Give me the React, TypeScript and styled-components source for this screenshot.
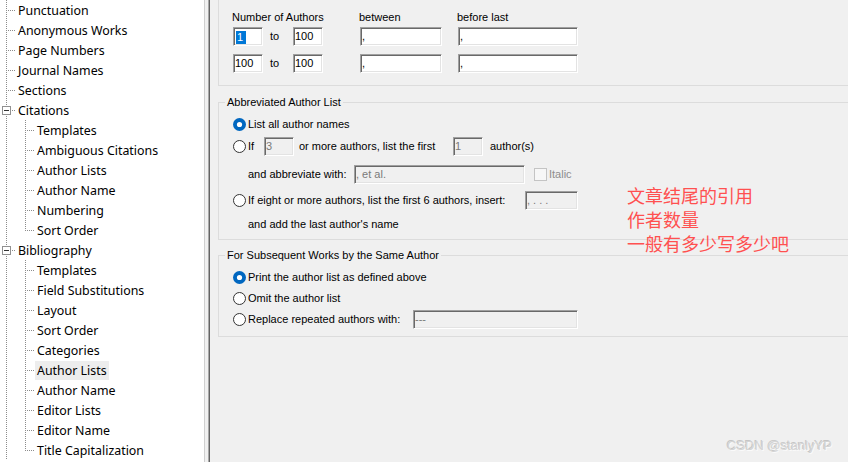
import styled, { createGlobalStyle } from "styled-components";

const GlobalStyle = createGlobalStyle`
  html, body {
    margin: 0;
    padding: 0;
  }
  body {
    width: 848px;
    height: 462px;
    overflow: hidden;
    background: #f0f0f0;
  }
`;

type TreeRow = {
  label: string;
  level: 1 | 2;
  last?: boolean;
  box?: boolean;
  selected?: boolean;
};

const treeRows: TreeRow[] = [
  { label: "Punctuation", level: 1 },
  { label: "Anonymous Works", level: 1 },
  { label: "Page Numbers", level: 1 },
  { label: "Journal Names", level: 1 },
  { label: "Sections", level: 1 },
  { label: "Citations", level: 1, box: true },
  { label: "Templates", level: 2 },
  { label: "Ambiguous Citations", level: 2 },
  { label: "Author Lists", level: 2 },
  { label: "Author Name", level: 2 },
  { label: "Numbering", level: 2 },
  { label: "Sort Order", level: 2, last: true },
  { label: "Bibliography", level: 1, box: true },
  { label: "Templates", level: 2 },
  { label: "Field Substitutions", level: 2 },
  { label: "Layout", level: 2 },
  { label: "Sort Order", level: 2 },
  { label: "Categories", level: 2 },
  { label: "Author Lists", level: 2, selected: true },
  { label: "Author Name", level: 2 },
  { label: "Editor Lists", level: 2 },
  { label: "Editor Name", level: 2 },
  { label: "Title Capitalization", level: 2, last: true },
];

const DOT = "#8c8c8c";

// dotted connector lines of the tree, drawn per row
const Connector = ({ row }: { row: TreeRow }) => {
  const w = row.level === 1 ? 16 : 35;
  return (
    <svg width={w} height={20} shapeRendering="crispEdges">
      <line x1={6.5} y1={0} x2={6.5} y2={20} stroke={DOT} strokeDasharray="1 1" />
      {row.level === 1 && !row.box && (
        <line x1={8} y1={10.5} x2={16} y2={10.5} stroke={DOT} strokeDasharray="1 1" />
      )}
      {row.box && (
        <>
          <line x1={12} y1={10.5} x2={16} y2={10.5} stroke={DOT} strokeDasharray="1 1" />
          <rect x={2.5} y={6.5} width={8} height={8} fill="#fff" stroke="#919191" />
          <line x1={4} y1={10.5} x2={9} y2={10.5} stroke="#333" />
        </>
      )}
      {row.level === 2 && (
        <>
          <line
            x1={25.5}
            y1={0}
            x2={25.5}
            y2={row.last ? 11 : 20}
            stroke={DOT}
            strokeDasharray="1 1"
          />
          <line x1={27} y1={10.5} x2={35} y2={10.5} stroke={DOT} strokeDasharray="1 1" />
        </>
      )}
    </svg>
  );
};

const RadioIcon = ({ checked }: { checked?: boolean }) => (
  <svg width={13} height={13} viewBox="0 0 13 13">
    {checked ? (
      <>
        <circle cx={6.5} cy={6.5} r={6.5} fill="#0067c0" />
        <circle cx={6.5} cy={6.5} r={2.6} fill="#fff" />
      </>
    ) : (
      <circle cx={6.5} cy={6.5} r={6} fill="#fff" stroke="#333" strokeWidth={1} />
    )}
  </svg>
);

export default function App() {
  return (
    <>
      <GlobalStyle />
      <Window>
        <TreePanel>
          {treeRows.map((row, i) => (
            <TreeItem key={i}>
              <Connector row={row} />
              <TreeLabel $selected={row.selected}>{row.label}</TreeLabel>
            </TreeItem>
          ))}
        </TreePanel>
        <Splitter />
        <Content>
          <Group $mt={-12} $pt={10} $pb={12}>
            <Legend>Author Separators</Legend>
            <SepGrid>
              <HeadLabel $col="1 / 5">Number of Authors</HeadLabel>
              <HeadLabel $col="5">between</HeadLabel>
              <HeadLabel $col="7">before last</HeadLabel>
            </SepGrid>
            <SepGrid $mt={3}>
              <TextBox $w={30}>
                <Highlight>1</Highlight>
              </TextBox>
              <ToLabel>to</ToLabel>
              <TextBox $w={30}>100</TextBox>
              <span />
              <TextBox $w={82}>,</TextBox>
              <span />
              <TextBox $w={120}>,</TextBox>
            </SepGrid>
            <SepGrid $mt={8}>
              <TextBox $w={30}>100</TextBox>
              <ToLabel>to</ToLabel>
              <TextBox $w={30}>100</TextBox>
              <span />
              <TextBox $w={82}>,</TextBox>
              <span />
              <TextBox $w={120}>,</TextBox>
            </SepGrid>
          </Group>

          <Group $mt={10} $pt={5} $pb={1}>
            <Legend>Abbreviated Author List</Legend>
            <OptionRow $h={20}>
              <RadioIcon checked />
              <Text>List all author names</Text>
            </OptionRow>
            <OptionRow $h={24}>
              <RadioIcon />
              <Text $w={16}>If</Text>
              <TextBox $w={30} $disabled>
                3
              </TextBox>
              <Text $w={154} $ml={5}>
                or more authors, list the first
              </Text>
              <TextBox $w={30} $disabled>
                1
              </TextBox>
              <Text $ml={7}>author(s)</Text>
            </OptionRow>
            <OptionRow $h={32} $indent>
              <Text $w={106} $ml={0}>
                and abbreviate with:
              </Text>
              <TextBox $w={171} $disabled>
                , et al.
              </TextBox>
              <CheckBox />
              <Text $ml={2} $muted>
                Italic
              </Text>
            </OptionRow>
            <OptionRow $h={20}>
              <RadioIcon />
              <Text $w={277}>If eight or more authors, list the first 6 authors, insert:</Text>
              <TextBox $w={53} $disabled>
                , . . .
              </TextBox>
            </OptionRow>
            <OptionRow $h={28} $indent>
              <Text $ml={0}>and add the last author's name</Text>
            </OptionRow>
          </Group>

          <Group $mt={9} $pt={5} $pb={7}>
            <Legend>For Subsequent Works by the Same Author</Legend>
            <OptionRow $h={20}>
              <RadioIcon checked />
              <Text>Print the author list as defined above</Text>
            </OptionRow>
            <OptionRow $h={22}>
              <RadioIcon />
              <Text>Omit the author list</Text>
            </OptionRow>
            <OptionRow $h={20}>
              <RadioIcon />
              <Text $w={165}>Replace repeated authors with:</Text>
              <TextBox $w={165} $disabled>
                ---
              </TextBox>
            </OptionRow>
          </Group>
        </Content>

        <Annotation>
          文章结尾的引用
          <br />
          作者数量
          <br />
          一般有多少写多少吧
        </Annotation>
        <Watermark>CSDN @stanlyYP</Watermark>
      </Window>
    </>
  );
}

const Window = styled.div`
  position: relative;
  display: flex;
  width: 848px;
  height: 462px;
  overflow: hidden;
  background: #f0f0f0;
`;

const TreePanel = styled.ul`
  width: 204px;
  flex-shrink: 0;
  margin: 0;
  padding: 0;
  list-style: none;
  background: #fff;
  overflow: hidden;
`;

const TreeItem = styled.li`
  display: flex;
  align-items: center;
  height: 20px;
`;

const TreeLabel = styled.span<{ $selected?: boolean }>`
  padding: 0 2px;
  height: 19px;
  margin-bottom: -1px;
  font: 12.4px/19px "Noto Sans", "Open Sans", sans-serif;
  color: #000;
  white-space: nowrap;
  background: ${(p) => (p.$selected ? "#ededed" : "transparent")};
`;

const Splitter = styled.div`
  box-sizing: border-box;
  width: 6px;
  flex-shrink: 0;
  border-left: 1px solid #cfcfcf;
  border-right: 1px solid #646464;
  box-shadow: inset -1px 0 0 #a9a9a9;
`;

const Content = styled.div`
  flex: 1;
  min-width: 0;
  padding-left: 8px;
  overflow: hidden;
  font: 11px/13px "Liberation Sans", Arial, sans-serif;
  color: #000;
`;

const Group = styled.fieldset<{ $mt: number; $pt: number; $pb: number }>`
  width: 700px;
  min-inline-size: auto;
  margin: ${(p) => p.$mt}px 0 0 0;
  padding: ${(p) => p.$pt}px 0 ${(p) => p.$pb}px 14px;
  border: 1px solid #dcdcdc;
`;

const Legend = styled.legend`
  margin-left: -8px;
  padding: 0 2px;
  font: 11px/13px "Liberation Sans", Arial, sans-serif;
  color: #000;
`;

const SepGrid = styled.div<{ $mt?: number }>`
  display: grid;
  grid-template-columns: 30px 30px 30px 37px 82px 16px 120px;
  align-items: center;
  margin-top: ${(p) => p.$mt ?? 0}px;
`;

const HeadLabel = styled.span<{ $col: string }>`
  grid-column: ${(p) => p.$col};
  margin-left: -1px;
  line-height: 13px;
  white-space: nowrap;
`;

const ToLabel = styled.span`
  padding-left: 7px;
`;

const TextBox = styled.div<{ $w: number; $disabled?: boolean }>`
  box-sizing: border-box;
  flex-shrink: 0;
  width: ${(p) => p.$w}px;
  height: 19px;
  padding: 0 0 0 1px;
  border: 1px solid;
  border-color: #a0a0a0 #fff #fff #a0a0a0;
  box-shadow: inset 1px 1px 0 #696969, inset -1px -1px 0 #e3e3e3;
  background: ${(p) => (p.$disabled ? "#f0f0f0" : "#fff")};
  color: ${(p) => (p.$disabled ? "#7a7a7a" : "#000")};
  font: 11px/17px "Liberation Sans", Arial, sans-serif;
  white-space: nowrap;
  overflow: hidden;
`;

const Highlight = styled.span`
  display: inline-block;
  padding: 0 3px 0 1px;
  margin-left: 1px;
  line-height: 13px;
  vertical-align: middle;
  background: #0078d7;
  color: #fff;
`;

const OptionRow = styled.div<{ $h: number; $indent?: boolean }>`
  display: flex;
  align-items: center;
  height: ${(p) => p.$h}px;
  padding-left: ${(p) => (p.$indent ? 15 : 0)}px;
`;

const Text = styled.span<{ $w?: number; $ml?: number; $muted?: boolean }>`
  flex-shrink: 0;
  width: ${(p) => (p.$w ? `${p.$w}px` : "auto")};
  margin-left: ${(p) => p.$ml ?? 2}px;
  white-space: nowrap;
  color: ${(p) => (p.$muted ? "#8d8d8d" : "#000")};
`;

const CheckBox = styled.span`
  box-sizing: border-box;
  flex-shrink: 0;
  width: 13px;
  height: 13px;
  margin-left: 9px;
  border: 1px solid #c4c4c4;
  background: #f7f7f7;
`;

const Annotation = styled.div`
  position: absolute;
  left: 627px;
  top: 183px;
  font: 18px/24px "Noto Sans CJK SC", sans-serif;
  color: #ff5050;
  white-space: nowrap;
`;

const Watermark = styled.div`
  position: absolute;
  right: 16px;
  top: 438px;
  font: 13px/16px "Liberation Sans", Arial, sans-serif;
  color: #d4d4d4;
  text-shadow: 1px 1px 0 #fafafa, -1px -1px 0 #c6c6c6;
`;
